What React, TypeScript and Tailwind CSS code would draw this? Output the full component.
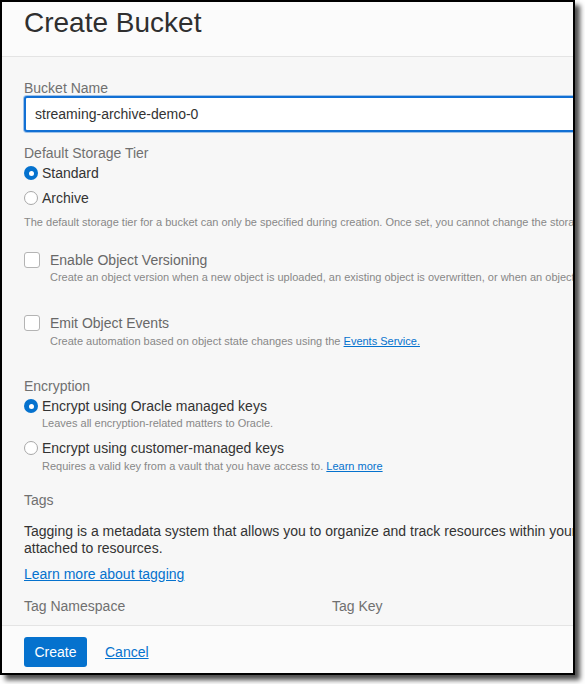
import React from 'react'

const font = "font-['Liberation_Sans',Arial,Helvetica,sans-serif]"

function Radio({ checked }: { checked?: boolean }) {
  return checked ? (
    <span className="flex-shrink-0 w-[14px] h-[14px] rounded-full bg-[#0572ce] flex items-center justify-center">
      <span className="w-[5px] h-[5px] rounded-full bg-white" />
    </span>
  ) : (
    <span className="flex-shrink-0 w-[14px] h-[14px] rounded-full bg-white border border-[#a8a8a8]" />
  )
}

function Checkbox() {
  return <span className="flex-shrink-0 w-[16px] h-[16px] rounded-[3px] bg-white border border-[#b4b4b4]" />
}

export default function App() {
  return (
    <div className={`w-[585px] h-[684px] bg-white ${font}`}>
      {/* Dialog window */}
      <div className="w-[575px] h-[675px] border-2 border-black overflow-hidden flex flex-col bg-[#f7f7f7] shadow-[5px_5px_5px_rgba(0,0,0,0.7)]">
        {/* Header */}
        <div className="flex-shrink-0 h-[55px] pt-[4px] pl-[22px] bg-[#fbfbfb] border-b border-[#e4e4e4]">
          <h1 className="text-[28px] leading-[34px] text-[#2f2f2f] whitespace-nowrap">Create Bucket</h1>
        </div>

        {/* Body */}
        <div className="flex-1 overflow-hidden pl-[22px] pt-[22px] whitespace-nowrap">
          <div className="text-[14px] leading-[18px] text-[#707070]">Bucket Name</div>
          <div className="w-[640px] h-[36px] mt-[-1px] bg-white border-2 border-[#1270d4] rounded-[3px] shadow-[0_0_0_1px_rgba(100,160,225,0.6)] flex items-center pl-[9px] text-[14px] text-[#333]">
            streaming-archive-demo-0
          </div>

          <div className="mt-[11px] text-[14px] leading-[20px] text-[#707070]">Default Storage Tier</div>
          <div className="flex items-center gap-[4px] h-[20px] text-[14px] text-[#333]">
            <Radio checked />
            <span>Standard</span>
          </div>
          <div className="flex items-center gap-[4px] h-[20px] mt-[5px] text-[14px] text-[#333]">
            <Radio />
            <span>Archive</span>
          </div>
          <div className="mt-[6px] text-[11px] leading-[16px] text-[#888]">
            The default storage tier for a bucket can only be specified during creation. Once set, you cannot change the storage tier in which a bucket resides.
          </div>

          <div className="mt-[21px] flex items-center gap-[10px] h-[18px] text-[14px] text-[#686868]">
            <Checkbox />
            <span>Enable Object Versioning</span>
          </div>
          <div className="pl-[26px] text-[11px] leading-[16px] text-[#888]">
            Create an object version when a new object is uploaded, an existing object is overwritten, or when an object is deleted.
          </div>

          <div className="mt-[29px] flex items-center gap-[10px] h-[18px] text-[14px] text-[#686868]">
            <Checkbox />
            <span>Emit Object Events</span>
          </div>
          <div className="mt-[1px] pl-[26px] text-[11px] leading-[16px] text-[#888]">
            Create automation based on object state changes using the{' '}
            <a className="text-[#0572ce] underline">Events Service.</a>
          </div>

          <div className="mt-[27px] text-[14px] leading-[20px] text-[#707070]">Encryption</div>
          <div className="mt-[1px] flex items-center gap-[4px] h-[18px] text-[14px] text-[#333]">
            <Radio checked />
            <span>Encrypt using Oracle managed keys</span>
          </div>
          <div className="pl-[18px] text-[11px] leading-[16px] text-[#888]">
            Leaves all encryption-related matters to Oracle.
          </div>
          <div className="mt-[8px] flex items-center gap-[4px] h-[18px] text-[14px] text-[#333]">
            <Radio />
            <span>Encrypt using customer-managed keys</span>
          </div>
          <div className="mt-[1px] pl-[18px] text-[11px] leading-[16px] text-[#888]">
            Requires a valid key from a vault that you have access to.{' '}
            <a className="text-[#0572ce] underline">Learn more</a>
          </div>

          <div className="mt-[16px] text-[14px] leading-[20px] text-[#707070]">Tags</div>
          <div className="mt-[13px] text-[14px] leading-[17px] text-[#333]">
            <div>Tagging is a metadata system that allows you to organize and track resources within your tenancy. Tags are composed of keys and values that can be</div>
            <div>attached to resources.</div>
          </div>
          <div className="mt-[7px] text-[14px] leading-[20px]">
            <a className="text-[#0572ce] underline">Learn more about tagging</a>
          </div>

          <div className="mt-[12px] flex text-[14px] leading-[20px] text-[#707070]">
            <div className="w-[308px] flex-shrink-0">Tag Namespace</div>
            <div className="w-[308px] flex-shrink-0">Tag Key</div>
            <div className="w-[308px] flex-shrink-0">Tag Value</div>
          </div>
        </div>

        {/* Footer */}
        <div className="flex-shrink-0 h-[48px] border-t border-[#e4e4e4] bg-[#fbfbfb] pl-[22px] pt-[11px] flex items-start gap-[18px]">
          <button className="w-[63px] h-[30px] rounded-[3px] bg-[#0572ce] text-white text-[14px]">Create</button>
          <a className="text-[14px] leading-[30px] text-[#0572ce] underline">Cancel</a>
        </div>
      </div>
    </div>
  )
}
